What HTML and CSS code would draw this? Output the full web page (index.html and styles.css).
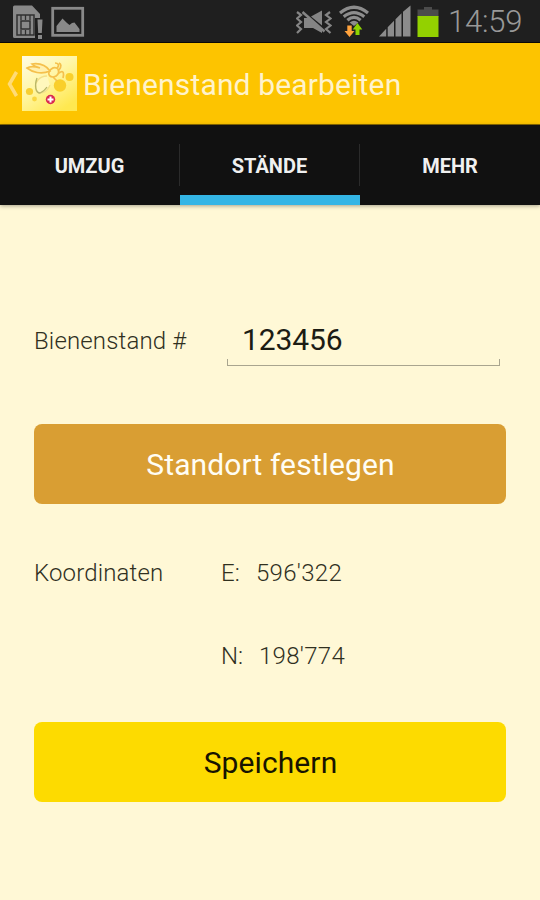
FILE: index.html
```html
<!DOCTYPE html>
<html lang="de">
<head>
    <meta charset="UTF-8">
    <meta name="viewport" content="width=device-width, initial-scale=1.0">
    <title>Bienenstand bearbeiten</title>
    <link rel="stylesheet" href="styles.css">
</head>
<body>
    <div class="statusbar">
        <svg class="icon-sim" width="32" height="42" viewBox="0 0 32 42">
            <path d="M0 7Q0 5.500 1.500 5.500H19L27 14V18H22V38H1.500Q0 38 0 36.500Z" fill="#898989"/>
            <path d="M4 15H21V35H4Z" fill="#898989" stroke="#303030" stroke-width="1.500"/>
            <path d="M8 15V20M12.500 15V20M17 15V20M8 30V35M12.500 30V35M17 30V35" stroke="#303030" stroke-width="1.300"/>
            <path d="M8 21H17V29H8Z" fill="#898989" stroke="#303030" stroke-width="1.500"/>
            <path d="M24.500 19.500H29.500L28.800 33H25.200ZM25 35H29V39H25Z" fill="#898989"/>
        </svg>
        <svg class="icon-image" width="33" height="42" viewBox="0 0 33 42">
            <rect x="0.700" y="8.300" width="30" height="27" fill="none" stroke="#898989" stroke-width="2.800"/>
            <path d="M4.500 32V26L10.500 18.500L15 23L17.500 25L20 23L22.500 22.500L27.500 29V32Z" fill="#898989"/>
        </svg>
        <svg class="icon-mute" width="36" height="42" viewBox="0 0 36 42">
            <path d="M1 12L5 15L1 18.500L5 22L1 25.500L5 29L1 33" fill="none" stroke="#858585" stroke-width="2.200"/>
            <path d="M34 12L30 15L34.500 18.500L30 22L34.500 25.500L30 29L34.500 33" fill="none" stroke="#858585" stroke-width="2.200"/>
            <path d="M8 18H13L26 29.500V33L17 28H8Z" fill="#858585"/>
            <path d="M15 16.500L26 10.500V25.500Z" fill="#858585"/>
            <path d="M6.500 12L28.500 31.500" stroke="#858585" stroke-width="2.500"/>
        </svg>
        <svg class="icon-wifi" width="30" height="42" viewBox="0 0 30 42">
            <path d="M1 13Q15 1.500 29 13M4.700 16.800Q15 8.500 25.300 16.800M8.400 20.300Q15 14.500 21.600 20.300" fill="none" stroke="#8d8d8d" stroke-width="3.200"/>
            <path d="M10.700 22.500Q15 19 19.300 22.500L15 26Z" fill="#8d8d8d"/>
            <path d="M8.300 25.500H12.700V31H15.500L10.500 37L5.500 31H8.300Z" fill="#ffa23c"/>
            <path d="M16.500 35H20.500V29.500H23.300L18.500 23L13.700 29.500H16.500Z" fill="#8ed300"/>
        </svg>
        <svg class="icon-signal" width="32" height="42" viewBox="0 0 32 42">
            <path d="M0 36.500L7.200 28.800V36.500ZM8.700 27.300L15 20.800V36.500H8.700ZM16.500 19.200L22.500 13.300V36.500H16.500ZM24 11.700L31.500 5.500V36.500H24Z" fill="#8c8c8c"/>
        </svg>
        <svg class="icon-battery" width="22" height="42" viewBox="0 0 22 42">
            <path d="M7 7H15V9.500H21.500V17H.5V9.500H7Z" fill="#4b4b4b"/>
            <path d="M.5 16H21.500V37H.5Z" fill="#93d100"/>
        </svg>
        <span class="clock">14:59</span>
    </div>

    <div class="actionbar">
        <svg class="icon-back" width="13" height="30" viewBox="0 0 13 30">
            <path d="M9.500 3L2.500 15L9.500 27" fill="none" stroke="#ffdb76" stroke-width="3.500"/>
        </svg>
        <svg class="app-icon" width="55" height="55" viewBox="0 0 55 55">
            <defs>
                <linearGradient id="tile" x1="0" y1="0" x2=".7" y2="1">
                    <stop offset="0" stop-color="#fffce6"/>
                    <stop offset=".5" stop-color="#fff6a5"/>
                    <stop offset="1" stop-color="#ffe850"/>
                </linearGradient>
            </defs>
            <rect width="55" height="55" fill="url(#tile)"/>
            <circle cx="38" cy="29.500" r="6.200" fill="#f9cf2b"/>
            <circle cx="47.500" cy="21" r="4" fill="#f9d02d"/>
            <circle cx="7.500" cy="35.500" r="3.600" fill="#f7cf32"/>
            <circle cx="12.500" cy="43" r="2.400" fill="#f9d640"/>
            <path d="M28 15C23 8 17 7 10 8C12 10 15 11 18 12C12 10 8 10 5 12C10 16 19 19 28 15Z" fill="#fff0ae" stroke="#f5c04c" stroke-width="1.700"/>
            <path d="M27 16C29 12 33 10 36 13C38 17 35 21 31 21C28 21 26 19 27 16M35 12C38 9 36 7 33 7M37 14C40 10 39 8 37 7M37 17C42 13 42 18 41 22M31 21L35 25" fill="none" stroke="#f5c04c" stroke-width="1.700"/>
            <path d="M25 20C17 20 12 27 14 34C16 40 25 37 28 29" fill="#fff8bd" stroke="#f3e08a" stroke-width="1.300"/>
            <path d="M15 22C12 30 14 37 18 37C21 36 23 34 25 31" fill="none" stroke="#b9b768" stroke-width="1.300"/>
            <circle cx="28.500" cy="43.500" r="4.700" fill="#d92850"/>
            <path d="M28.500 40.500V46.500M25.500 43.500H31.500" stroke="#fff" stroke-width="2"/>
        </svg>
        <span class="title">Bienenstand bearbeiten</span>
    </div>

    <div class="tabs">
        <div class="tab"><span class="tab-label">UMZUG</span></div>
        <div class="tab active"><span class="tab-label">STÄNDE</span></div>
        <div class="tab"><span class="tab-label">MEHR</span></div>
    </div>

    <div class="content">
        <div class="row row-stand">
            <label class="label" for="stand">Bienenstand #</label>
            <div class="field">
                <input class="input" id="stand" type="text" value="123456">
            </div>
        </div>
        <button class="btn btn-location">Standort festlegen</button>
        <div class="row row-coord">
            <span class="label">Koordinaten</span>
            <span class="axis axis-e">E:</span>
            <span class="value">596'322</span>
        </div>
        <div class="row row-coord">
            <span class="label"></span>
            <span class="axis axis-n">N:</span>
            <span class="value">198'774</span>
        </div>
        <button class="btn btn-save">Speichern</button>
    </div>
</body>
</html>
```

FILE: styles.css
```css
* {
    box-sizing: border-box;
}
body {
    margin: 0;
    width: 540px;
    height: 900px;
    overflow: hidden;
    background-color: #fff8d6;
    font-family: Roboto, "Liberation Sans", sans-serif;
}
/* Statusleiste */
.statusbar {
    display: flex;
    align-items: center;
    height: 43px;
    padding-left: 13px;
    background-color: #1f1f1f;
    border-bottom: 1px solid #0b0905;
}
.icon-image {
    margin-left: 7px;
    overflow: visible;
}
.icon-mute {
    margin-left: 211px;
}
.icon-wifi {
    margin-left: 7px;
}
.icon-signal {
    margin-left: 10px;
}
.icon-battery {
    margin-left: 6px;
}
.clock {
    margin-left: 9px;
    padding-top: 2px;
    font-size: 31px;
    line-height: 40px;
    letter-spacing: -0.2px;
    color: #999;
    font-weight: 300;
}
/* Titelleiste */
.actionbar {
    display: flex;
    align-items: center;
    height: 82px;
    padding-left: 7px;
    background-color: #fdc400;
    border-bottom: 1px solid #8a6a00;
}
.app-icon {
    margin-left: 2px;
}
.title {
    margin-left: 6px;
    padding-top: 2px;
    font-size: 30px;
    line-height: 38px;
    letter-spacing: 0.15px;
    color: #fff3cc;
    white-space: nowrap;
}
/* Tabs */
.tabs {
    display: flex;
    height: 80px;
    background-color: #111;
    box-shadow: 0 1px 4px rgba(0, 0, 0, 0.35);
}
.tab {
    display: flex;
    justify-content: center;
    width: 180px;
    height: 80px;
    padding-top: 29px;
    padding-right: 1px;
    background: linear-gradient(#2b2b2b, #2b2b2b) no-repeat right 19px / 1px 42px;
}
.tab:last-child {
    padding-right: 0;
    background: none;
}
.tab.active {
    border-bottom: 10px solid #34b5e5;
}
.tab-label {
    font-size: 20px;
    line-height: 24px;
    font-weight: bold;
    color: #f0f0f0;
}
/* Formular */
.content {
    padding: 105px 34px 0;
}
.row {
    display: flex;
    align-items: center;
    color: #30301f;
    font-size: 24px;
}
.row-stand {
    height: 62px;
}
.label {
    width: 187px;
    font-weight: 300;
    letter-spacing: 0.15px;
    white-space: nowrap;
}
.row-stand .label {
    width: 193px;
}
.field {
    width: 273px;
    height: 50px;
    background: linear-gradient(#a9a58f, #a9a58f) no-repeat left bottom / 1px 6px,
                linear-gradient(#a9a58f, #a9a58f) no-repeat right bottom / 1px 6px;
    border-bottom: 1px solid #a9a58f;
}
.input {
    width: 100%;
    height: 46px;
    padding: 0 0 0 15px;
    border: none;
    outline: none;
    background: none;
    font-family: inherit;
    font-size: 30px;
    letter-spacing: -0.1px;
    color: #1c1c14;
}
.btn {
    display: block;
    width: 472px;
    height: 80px;
    padding: 0 0 0 1px;
    border: none;
    border-radius: 8px;
    font-family: inherit;
    font-size: 30px;
    letter-spacing: 0.1px;
}
.btn-location {
    margin-top: 52px;
    margin-bottom: 27px;
    background-color: #d99e33;
    color: #fffdf4;
}
.row-coord {
    height: 83px;
}
.axis {
    font-weight: 300;
}
.axis-e {
    width: 35px;
}
.axis-n {
    width: 38px;
}
.value {
    font-weight: 300;
    letter-spacing: 0.3px;
}
.btn-save {
    margin-top: 25px;
    background-color: #fddb00;
    color: #171400;
}
```
